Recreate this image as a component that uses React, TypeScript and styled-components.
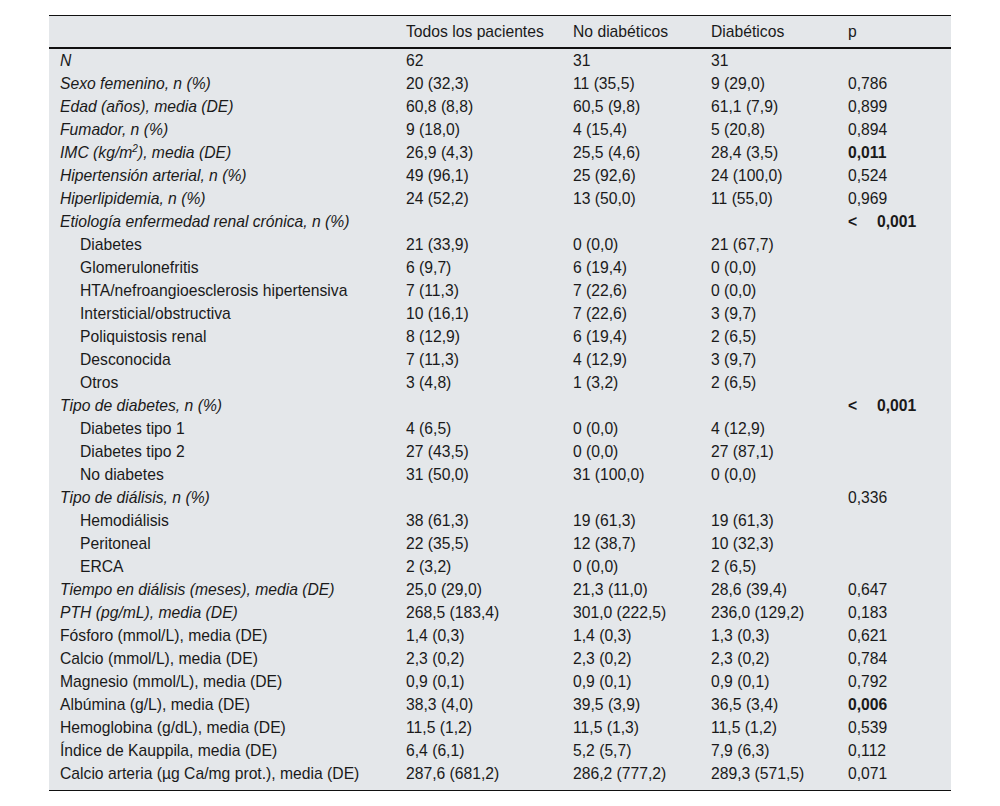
import styled, { createGlobalStyle } from "styled-components"

const GlobalStyle = createGlobalStyle`
  body {
    margin: 0;
    background: #ffffff;
    font-family: "Liberation Sans", Arial, sans-serif;
    color: #1a1a1a;
  }
`

type Row = {
  label: React.ReactNode
  all?: string
  nondia?: string
  dia?: string
  p?: React.ReactNode
  italic?: boolean
  sub?: boolean
}

const rows: Row[] = [
  { label: "N", all: "62", nondia: "31", dia: "31", italic: true },
  { label: "Sexo femenino, n (%)", all: "20 (32,3)", nondia: "11 (35,5)", dia: "9 (29,0)", p: "0,786", italic: true },
  { label: "Edad (años), media (DE)", all: "60,8 (8,8)", nondia: "60,5 (9,8)", dia: "61,1 (7,9)", p: "0,899", italic: true },
  { label: "Fumador, n (%)", all: "9 (18,0)", nondia: "4 (15,4)", dia: "5 (20,8)", p: "0,894", italic: true },
  {
    label: <>IMC (kg/m<sup>2</sup>), media (DE)</>,
    all: "26,9 (4,3)", nondia: "25,5 (4,6)", dia: "28,4 (3,5)", p: <b>0,011</b>, italic: true,
  },
  { label: "Hipertensión arterial, n (%)", all: "49 (96,1)", nondia: "25 (92,6)", dia: "24 (100,0)", p: "0,524", italic: true },
  { label: "Hiperlipidemia, n (%)", all: "24 (52,2)", nondia: "13 (50,0)", dia: "11 (55,0)", p: "0,969", italic: true },
  { label: "Etiología enfermedad renal crónica, n (%)", p: "lt", italic: true },
  { label: "Diabetes", all: "21 (33,9)", nondia: "0 (0,0)", dia: "21 (67,7)", sub: true },
  { label: "Glomerulonefritis", all: "6 (9,7)", nondia: "6 (19,4)", dia: "0 (0,0)", sub: true },
  { label: "HTA/nefroangioesclerosis hipertensiva", all: "7 (11,3)", nondia: "7 (22,6)", dia: "0 (0,0)", sub: true },
  { label: "Intersticial/obstructiva", all: "10 (16,1)", nondia: "7 (22,6)", dia: "3 (9,7)", sub: true },
  { label: "Poliquistosis renal", all: "8 (12,9)", nondia: "6 (19,4)", dia: "2 (6,5)", sub: true },
  { label: "Desconocida", all: "7 (11,3)", nondia: "4 (12,9)", dia: "3 (9,7)", sub: true },
  { label: "Otros", all: "3 (4,8)", nondia: "1 (3,2)", dia: "2 (6,5)", sub: true },
  { label: "Tipo de diabetes, n (%)", p: "lt", italic: true },
  { label: "Diabetes tipo 1", all: "4 (6,5)", nondia: "0 (0,0)", dia: "4 (12,9)", sub: true },
  { label: "Diabetes tipo 2", all: "27 (43,5)", nondia: "0 (0,0)", dia: "27 (87,1)", sub: true },
  { label: "No diabetes", all: "31 (50,0)", nondia: "31 (100,0)", dia: "0 (0,0)", sub: true },
  { label: "Tipo de diálisis, n (%)", p: "0,336", italic: true },
  { label: "Hemodiálisis", all: "38 (61,3)", nondia: "19 (61,3)", dia: "19 (61,3)", sub: true },
  { label: "Peritoneal", all: "22 (35,5)", nondia: "12 (38,7)", dia: "10 (32,3)", sub: true },
  { label: "ERCA", all: "2 (3,2)", nondia: "0 (0,0)", dia: "2 (6,5)", sub: true },
  { label: "Tiempo en diálisis (meses), media (DE)", all: "25,0 (29,0)", nondia: "21,3 (11,0)", dia: "28,6 (39,4)", p: "0,647", italic: true },
  { label: "PTH (pg/mL), media (DE)", all: "268,5 (183,4)", nondia: "301,0 (222,5)", dia: "236,0 (129,2)", p: "0,183", italic: true },
  { label: "Fósforo (mmol/L), media (DE)", all: "1,4 (0,3)", nondia: "1,4 (0,3)", dia: "1,3 (0,3)", p: "0,621" },
  { label: "Calcio (mmol/L), media (DE)", all: "2,3 (0,2)", nondia: "2,3 (0,2)", dia: "2,3 (0,2)", p: "0,784" },
  { label: "Magnesio (mmol/L), media (DE)", all: "0,9 (0,1)", nondia: "0,9 (0,1)", dia: "0,9 (0,1)", p: "0,792" },
  { label: "Albúmina (g/L), media (DE)", all: "38,3 (4,0)", nondia: "39,5 (3,9)", dia: "36,5 (3,4)", p: <b>0,006</b> },
  { label: "Hemoglobina (g/dL), media (DE)", all: "11,5 (1,2)", nondia: "11,5 (1,3)", dia: "11,5 (1,2)", p: "0,539" },
  { label: "Índice de Kauppila, media (DE)", all: "6,4 (6,1)", nondia: "5,2 (5,7)", dia: "7,9 (6,3)", p: "0,112" },
  { label: "Calcio arteria (µg Ca/mg prot.), media (DE)", all: "287,6 (681,2)", nondia: "286,2 (777,2)", dia: "289,3 (571,5)", p: "0,071" },
]

const App = () => {
  return (
    <Page>
      <GlobalStyle />
      <Table>
        <colgroup>
          <col style={{ width: 346 }} />
          <col style={{ width: 167 }} />
          <col style={{ width: 138 }} />
          <col style={{ width: 137 }} />
          <col style={{ width: 114 }} />
        </colgroup>
        <thead>
          <tr>
            <Th></Th>
            <Th>Todos los pacientes</Th>
            <Th>No diabéticos</Th>
            <Th>Diabéticos</Th>
            <Th>p</Th>
          </tr>
        </thead>
        <tbody>
          {rows.map((r, i) => (
            <tr key={i}>
              <Label $italic={r.italic} $sub={r.sub}>{r.label}</Label>
              <Td>{r.all}</Td>
              <Td>{r.nondia}</Td>
              <Td>{r.dia}</Td>
              <Td>
                {r.p === "lt" ? (
                  <>
                    <Lt>&lt;</Lt>
                    <b>0,001</b>
                  </>
                ) : (
                  r.p
                )}
              </Td>
            </tr>
          ))}
        </tbody>
      </Table>
    </Page>
  )
}

export default App

const Page = styled.div`
  padding: 15px 0 0 49px;
`

const Table = styled.table`
  width: 902px;
  table-layout: fixed;
  border-collapse: collapse;
  background: #e4e7ea;
  font-size: 15.7px;
  border-top: 1px solid #111;
  border-bottom: 1px solid #111;

  tbody tr:last-child td {
    padding-bottom: 5px;
  }

  sup {
    font-size: 10px;
    line-height: 0;
    vertical-align: 6px;
  }

  b {
    font-weight: 700;
  }
`

const Th = styled.th`
  height: 31px;
  padding: 0 0 0 11px;
  text-align: left;
  font-weight: 400;
  border-bottom: 2px solid #111;
  white-space: nowrap;
`

const Td = styled.td`
  height: 23px;
  padding: 0 0 0 11px;
  line-height: 23px;
  white-space: nowrap;
`

const Label = styled(Td)<{ $italic?: boolean; $sub?: boolean }>`
  font-style: ${(p) => (p.$italic ? "italic" : "normal")};
  padding-left: ${(p) => (p.$sub ? "31px" : "11px")};
`

const Lt = styled.span`
  display: inline-block;
  width: 29px;
  font-weight: 700;
`
